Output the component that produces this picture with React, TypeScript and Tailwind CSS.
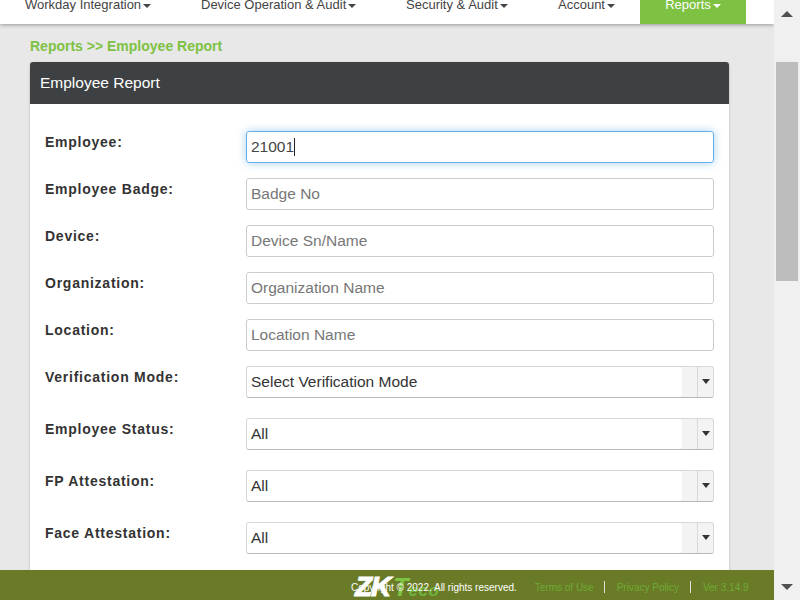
const navItems = [
  { label: "Workday Integration", w: "w-[176px]" },
  { label: "Device Operation & Audit", w: "w-[205px]" },
  { label: "Security & Audit", w: "w-[152px]" },
  { label: "Account", w: "w-[82px]" },
];

function Caret({ className }: { className: string }) {
  return <span className={`ml-[2px] inline-block h-0 w-0 border-x-[4px] border-t-[4px] border-x-transparent align-middle ${className}`} />;
}

function FieldRow({ label, placeholder, value }: { label: string; placeholder: string; value?: string }) {
  return (
    <div className="flex h-[47px] items-start">
      <label className="w-[201px] shrink-0 pt-[1px] text-[14px] font-bold leading-[20px] tracking-[0.75px] text-[#333]">{label}</label>
      {value ? (
        <div className="flex h-[32px] w-[468px] shrink-0 items-center rounded-[3px] border border-[#66afe9] px-[4px] text-[15.5px] text-[#444] shadow-[0_0_8px_rgba(102,175,233,0.6)]">
          {value}
          <span className="h-[18px] w-px bg-[#222]" />
        </div>
      ) : (
        <div className="flex h-[32px] w-[468px] shrink-0 items-center rounded-[3px] border border-[#ccc] px-[4px] text-[15.5px] text-[#777]">{placeholder}</div>
      )}
    </div>
  );
}

function SelectRow({ label, value }: { label: string; value: string }) {
  return (
    <div className="flex h-[52px] items-start">
      <label className="w-[201px] shrink-0 pt-[1px] text-[14px] font-bold leading-[20px] tracking-[0.75px] text-[#333]">{label}</label>
      <div className="flex h-[32px] w-[468px] shrink-0 rounded-[3px] border border-[#d8d8d8] border-b-[#b8b8b8] bg-[#f3f3f3]">
        <div className="flex w-[435px] items-center rounded-[3px] bg-white px-[4px] text-[15.5px] text-[#333]">{value}</div>
        <div className="ml-[15px] flex flex-1 items-center justify-center rounded-r-[3px] border-l border-[#d8d8d8]">
          <span className="mb-[2px] h-0 w-0 border-x-[4px] border-t-[5px] border-x-transparent border-t-[#333]" />
        </div>
      </div>
    </div>
  );
}

export default function App() {
  return (
    <div className="relative flex h-[600px] w-[800px] overflow-hidden bg-[#e8e8e8] font-['Liberation_Sans',Arial,sans-serif]">
      <div className="flex w-[774px] flex-col">
        <nav className="z-10 flex h-[24px] shrink-0 items-start overflow-hidden bg-white pl-[25px] text-[13px] leading-[20px] text-[#444] shadow-[0_1px_4px_rgba(0,0,0,0.35)]">
          {navItems.map((n) => (
            <div key={n.label} className={`${n.w} mt-[-5px] shrink-0 whitespace-nowrap`}>
              {n.label}
              <Caret className="border-t-[#444]" />
            </div>
          ))}
          <div className="flex h-[24px] w-[106px] shrink-0 justify-center bg-[#7dc242] text-white">
            <span className="mt-[-5px] whitespace-nowrap">Reports<Caret className="border-t-white" /></span>
          </div>
        </nav>
        <div className="pl-[30px] pt-[14px]">
          <div className="h-[24px] text-[14px] font-bold leading-[17px] text-[#7dc242]">Reports &gt;&gt; Employee Report</div>
          <section className="w-[699px] rounded-t-[3px] bg-white pb-[40px] shadow-[0_1px_3px_rgba(0,0,0,0.2)]">
            <header className="flex h-[42px] items-center rounded-t-[3px] bg-[#3e4144] pl-[10px] text-[15.5px] text-white">Employee Report</header>
            <div className="pl-[15px] pt-[27px]">
              <FieldRow label="Employee:" placeholder="" value="21001" />
              <FieldRow label="Employee Badge:" placeholder="Badge No" />
              <FieldRow label="Device:" placeholder="Device Sn/Name" />
              <FieldRow label="Organization:" placeholder="Organization Name" />
              <FieldRow label="Location:" placeholder="Location Name" />
              <SelectRow label="Verification Mode:" value="Select Verification Mode" />
              <SelectRow label="Employee Status:" value="All" />
              <SelectRow label="FP Attestation:" value="All" />
              <SelectRow label="Face Attestation:" value="All" />
            </div>
          </section>
        </div>
      </div>
      <aside className="z-30 flex w-[26px] flex-col items-center bg-[#f0f0f0]">
        <div className="flex h-[24px] items-center justify-center pt-[3px]">
          <span className="h-0 w-0 border-x-[6px] border-b-[6px] border-x-transparent border-b-[#505050]" />
        </div>
        <div className="mt-[38px] h-[219px] w-[22px] bg-[#bdbdbd]" />
        <div className="flex-1" />
        <div className="flex h-[24px] items-center justify-center pb-[3px]">
          <span className="h-0 w-0 border-x-[6px] border-t-[6px] border-x-transparent border-t-[#505050]" />
        </div>
      </aside>
      <footer className="absolute bottom-0 left-0 z-20 flex h-[30px] w-[774px] items-center whitespace-nowrap bg-[#6a7b27] pl-[351px] pt-[4px] text-[10px] text-[#6eaa35]">
        <div className="absolute left-[355px] top-[3px] flex items-baseline font-bold italic leading-[28px]">
          <span className="text-[28px] tracking-[-1px] text-white [-webkit-text-stroke:1px_white]">ZK</span>
          <span className="ml-[3px] text-[25px] leading-none text-[#7dc242]">T</span>
          <span className="text-[17px] tracking-[0.5px] text-[#6fb53c]">eco</span>
        </div>
        <span className="relative text-white">Copyright © 2022. All rights reserved.</span>
        <span className="ml-[18px]">Terms of Use</span>
        <span className="ml-[10px] mr-[11px] h-[12px] w-px bg-[#ddd]" />
        <span className="ml-[1px]">Privacy Policy</span>
        <span className="mx-[11px] h-[12px] w-px bg-[#ddd]" />
        <span className="ml-[1px]">Ver 3.14.9</span>
      </footer>
    </div>
  );
}
